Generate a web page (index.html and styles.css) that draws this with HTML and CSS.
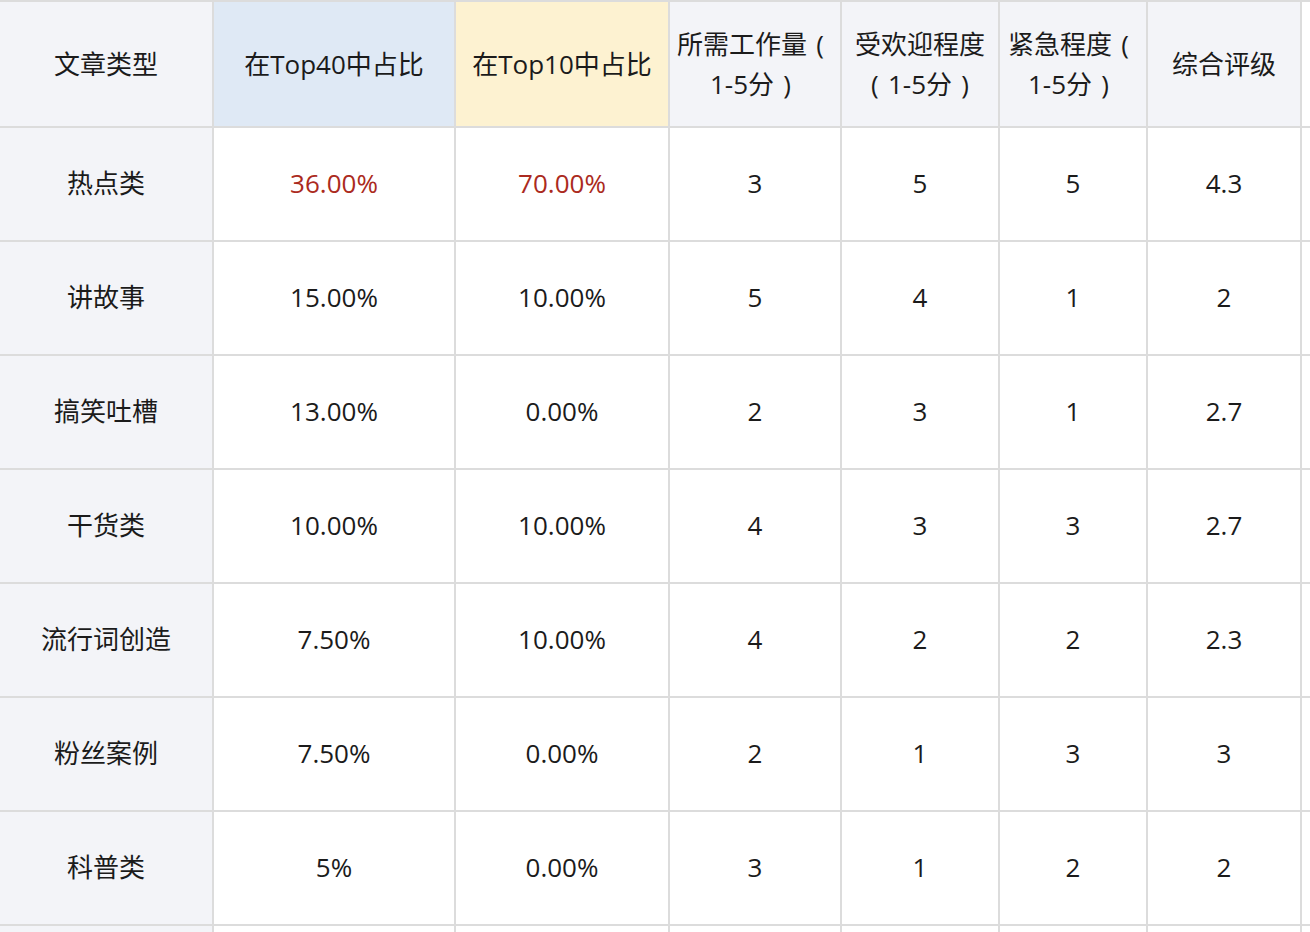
FILE: index.html
```html
<!DOCTYPE html>
<html lang="zh-CN">
<head>
<meta charset="utf-8">
<title>文章类型</title>
<link rel="stylesheet" href="styles.css">
</head>
<body>
<div class="viewport">
<table class="grid">
  <colgroup>
    <col class="c1"><col class="c2"><col class="c3"><col class="c4"><col class="c5"><col class="c6"><col class="c7"><col class="c8">
  </colgroup>
  <thead>
    <tr>
      <th class="head">文章类型</th>
      <th class="head blue">在Top40中占比</th>
      <th class="head yellow">在Top10中占比</th>
      <th class="head">所需工作量<span class="fp">(</span><br>1-5分<span class="fp">)</span></th>
      <th class="head">受欢迎程度<br><span class="fp">(</span>1-5分<span class="fp">)</span></th>
      <th class="head">紧急程度<span class="fp">(</span><br>1-5分<span class="fp">)</span></th>
      <th class="head">综合评级</th>
      <th class="blank"></th>
    </tr>
  </thead>
  <tbody>
    <tr><th class="label">热点类</th><td class="red">36.00%</td><td class="red">70.00%</td><td>3</td><td>5</td><td>5</td><td>4.3</td><td class="blank"></td></tr>
    <tr><th class="label">讲故事</th><td>15.00%</td><td>10.00%</td><td>5</td><td>4</td><td>1</td><td>2</td><td class="blank"></td></tr>
    <tr><th class="label">搞笑吐槽</th><td>13.00%</td><td>0.00%</td><td>2</td><td>3</td><td>1</td><td>2.7</td><td class="blank"></td></tr>
    <tr><th class="label">干货类</th><td>10.00%</td><td>10.00%</td><td>4</td><td>3</td><td>3</td><td>2.7</td><td class="blank"></td></tr>
    <tr><th class="label">流行词创造</th><td>7.50%</td><td>10.00%</td><td>4</td><td>2</td><td>2</td><td>2.3</td><td class="blank"></td></tr>
    <tr><th class="label">粉丝案例</th><td>7.50%</td><td>0.00%</td><td>2</td><td>1</td><td>3</td><td>3</td><td class="blank"></td></tr>
    <tr><th class="label">科普类</th><td>5%</td><td>0.00%</td><td>3</td><td>1</td><td>2</td><td>2</td><td class="blank"></td></tr>
    <tr><th class="label"></th><td></td><td></td><td></td><td></td><td></td><td></td><td class="blank"></td></tr>
  </tbody>
</table>
</div>
</body>
</html>
```

FILE: styles.css
```css
html, body {
  margin: 0;
  padding: 0;
  background: #ffffff;
}

.viewport {
  width: 1310px;
  height: 932px;
  overflow: hidden;
}

.grid {
  table-layout: fixed;
  border-collapse: separate;
  border-spacing: 0;
  width: 1502px;
  font-family: "Open Sans", "Noto Sans CJK SC", sans-serif;
  font-size: 26px;
  line-height: 40px;
  color: #1b1b1b;
  border-top: 2px solid #dcdcdc;
}

.c1 { width: 214px; }
.c2 { width: 242px; }
.c3 { width: 214px; }
.c4 { width: 172px; }
.c5 { width: 158px; }
.c6 { width: 148px; }
.c7 { width: 154px; }
.c8 { width: 200px; }

.grid th,
.grid td {
  box-sizing: border-box;
  padding: 0;
  text-align: center;
  vertical-align: middle;
  font-weight: 400;
  border-right: 2px solid #dcdcdc;
  border-bottom: 2px solid #dcdcdc;
  white-space: nowrap;
  background: #ffffff;
}

.grid thead th {
  height: 126px;
  background: #f3f4f8;
}

.grid tbody tr {
  height: 114px;
}

.grid tbody th,
.grid tbody td {
  padding-bottom: 3px;
}

.grid thead th.blue {
  background: #dfe9f5;
}

.grid thead th.yellow {
  background: #fdf2d1;
}

.grid th.label {
  background: #f3f4f8;
}

.grid th.blank,
.grid td.blank {
  background: #ffffff;
}

.grid td.red {
  color: #ab2a20;
}

.fp {
  display: inline-block;
  width: 26px;
  text-align: center;
}
```
